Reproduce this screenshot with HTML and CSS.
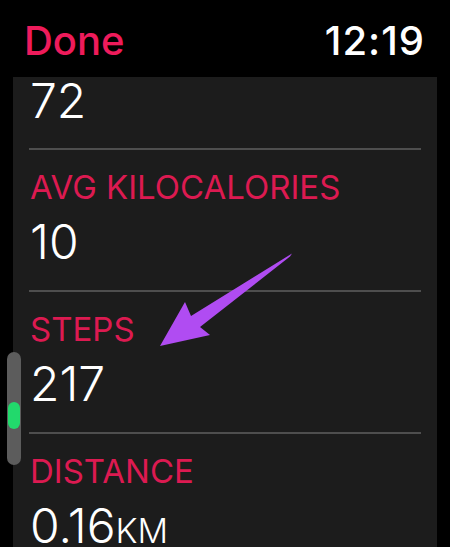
FILE: index.html
```html
<!DOCTYPE html>
<html>
  <head>
    <meta http-equiv="content-type" content="text/html; charset=UTF-8">
    <title>Workout Summary</title>
    <link rel="stylesheet" href="styles.css">
  </head>
<body>
  <div class="topbar">
    <div class="done">Done</div>
    <div class="clock">12:19</div>
  </div>

  <div class="card">
    <div class="row first">
      <div class="value">72</div>
    </div>
    <div class="row">
      <div class="label">AVG KILOCALORIES</div>
      <div class="value">10</div>
    </div>
    <div class="row">
      <div class="label">STEPS</div>
      <div class="value">217</div>
    </div>
    <div class="row">
      <div class="label">DISTANCE</div>
      <div class="value">0.16<span class="unit">KM</span></div>
    </div>
  </div>

  <!-- scroll position indicator -->
  <div class="scroller"><div class="thumb"></div></div>

  <!-- pointer arrow -->
  <svg class="pointer" width="450" height="547" viewBox="0 0 450 547">
    <polygon points="292,253.5 290,256.5 200,327 210,335 160,346 185,302 191,316" fill="#b04cf2" />
  </svg>
</body>
</html>
```

FILE: styles.css
```css
html {
  background: black;
  font-family: Inter, "Liberation Sans", sans-serif;
}

body {
  margin: 0;
  height: 547px;
  overflow: hidden;
  position: relative;
}

.topbar {
  display: flex;
  justify-content: space-between;
  padding: 18px 25px 13px 24px;
  font-size: 40px;
  line-height: 46px;
  font-weight: 500;
}

.done {
  color: #ee1b5b;
}

.clock {
  color: white;
  letter-spacing: 1px;
}

.card {
  margin: 0 13px;
  height: 470px;
  padding: 0 16px;
  background: #1c1c1c;
}

.row {
  padding: 17px 0 24px 1px;
  border-bottom: 2px solid #4e4e4e;
}

.row.first {
  padding-top: 0;
  padding-bottom: 23px;
}

.label {
  color: #dc1a51;
  font-size: 33px;
  line-height: 40px;
}

.value {
  margin-top: 11px;
  color: white;
  font-size: 48px;
  line-height: 48px;
  font-weight: 300;
}

.first .value {
  margin-top: 0;
}

.unit {
  font-size: 34px;
}

.scroller {
  position: absolute;
  left: 7px;
  top: 352px;
  width: 14px;
  height: 113px;
  border-radius: 7px;
  background: #5c5c5c;
}

.thumb {
  margin: 50px 0 0 1px;
  width: 12px;
  height: 27px;
  border-radius: 6px;
  background: #22d96c;
}

.pointer {
  position: absolute;
  left: 0;
  top: 0;
}
```
